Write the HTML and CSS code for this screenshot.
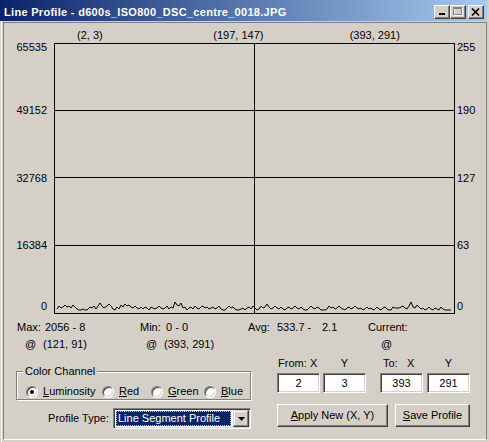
FILE: index.html
```html
<!DOCTYPE html>
<html lang="en">
<head>
    <meta charset="UTF-8">
    <title>Line Profile</title>
    <link rel="stylesheet" href="styles.css">
</head>
<body>
<div class="window">
    <!-- Title bar -->
    <div class="titlebar">
        <span class="title">Line Profile - d600s_ISO800_DSC_centre_0018.JPG</span>
        <div class="caption-buttons">
            <span class="cap-btn">
                <svg width="14" height="12"><rect x="4" y="7" width="6" height="2" fill="#000"/></svg>
            </span>
            <span class="cap-btn">
                <svg width="14" height="12">
                    <rect x="3.5" y="2.5" width="8" height="7" fill="none" stroke="#fff"/>
                    <rect x="2.5" y="1.5" width="8" height="7" fill="none" stroke="#808080"/>
                    <line x1="2" y1="2.5" x2="11" y2="2.5" stroke="#808080"/>
                </svg>
            </span>
            <span class="cap-btn cap-close">
                <svg width="14" height="12"><path d="M3 2.5 L10 9.5 M10 2.5 L3 9.5" stroke="#000" stroke-width="1.7"/></svg>
            </span>
        </div>
    </div>

    <div class="client">
        <div class="coords">
            <span>(2, 3)</span>
            <span>(197, 147)</span>
            <span>(393, 291)</span>
        </div>

        <!-- Profile chart -->
        <div class="chart">
            <div class="y-left row1">65535</div>
            <div class="y-left row2">49152</div>
            <div class="y-left row3">32768</div>
            <div class="y-left row4">16384</div>
            <div class="y-left row5">0</div>

            <div class="plot">
                <svg width="399" height="269" shape-rendering="crispEdges">
                    <line x1="0" y1="66.5" x2="399" y2="66.5" stroke="#000"/>
                    <line x1="0" y1="133.5" x2="399" y2="133.5" stroke="#000"/>
                    <line x1="0" y1="201.5" x2="399" y2="201.5" stroke="#000"/>
                    <line x1="199.5" y1="0" x2="199.5" y2="269" stroke="#000"/>
                    <polyline fill="none" stroke="#000" shape-rendering="auto" points="2,265 4,262 6,264 8,263 10,261 12,263 14,262 16,264 18,261 20,263 22,265 24,266 26,266 28,265 30,266 32,266 35,263 37,264 39,262 41,265 43,262 45,259 47,262 49,264 52,262 54,260 56,262 58,265 60,266 62,263 64,265 66,261 68,263 70,260 72,262 74,261 76,263 78,264 80,262 82,264 84,265 86,263 88,265 90,263 92,264 94,266 96,263 98,264 100,265 102,264 104,262 106,264 108,265 110,264 112,262 114,265 116,263 118,264 120,258 122,261 124,262 126,259 128,264 130,263 132,266 134,264 136,263 138,265 140,262 142,264 144,265 146,263 148,262 150,264 152,263 154,265 156,264 158,263 160,265 162,264 164,262 166,265 168,266 170,266 172,264 174,262 176,264 178,263 180,265 182,266 184,266 186,265 188,264 190,266 192,264 194,263 196,265 198,262 200,264 202,266 204,265 206,262 208,264 210,263 212,260 214,263 216,265 218,264 220,262 222,264 224,265 226,263 228,265 230,266 232,264 234,263 236,265 238,264 240,262 242,264 244,265 246,263 248,265 250,266 252,266 254,264 256,262 258,264 260,265 262,263 264,264 266,266 268,266 270,266 272,265 274,262 276,264 278,263 280,265 282,264 284,262 286,264 288,265 290,266 292,264 294,263 296,265 298,264 300,262 302,264 304,265 306,264 308,266 310,265 312,263 314,265 316,264 318,266 320,265 322,263 324,265 326,266 328,264 330,263 332,265 334,266 336,266 338,263 340,264 342,264 344,264 346,263 348,262 350,264 352,265 354,262 356,258 358,263 360,264 362,261 364,263 366,265 368,264 370,266 372,265 374,263 376,265 378,266 380,264 382,265 384,266 386,263 388,265 390,266 392,266 394,266 396,266"/>
                </svg>
            </div>

            <div class="y-right row1">255</div>
            <div class="y-right row2">190</div>
            <div class="y-right row3">127</div>
            <div class="y-right row4">63</div>
            <div class="y-right row5">0</div>
        </div>

        <!-- Statistics -->
        <div class="stats">
            <div><span class="stat-name w-max">Max:</span>2056 - 8</div>
            <div><span class="stat-name w-min">Min:</span>0 - 0</div>
            <div><span class="stat-name w-avg">Avg:</span><span class="avg-val">533.7 -</span>2.1</div>
            <div>Current:</div>

            <div><span class="at at-max">@</span>(121, 91)</div>
            <div><span class="at at-min">@</span>(393, 291)</div>
            <div></div>
            <div><span class="at at-cur">@</span></div>
        </div>

        <div class="controls">
            <div class="left-controls">
                <div class="groupbox">
                    <span class="group-title">Color Channel</span>
                    <div class="radios">
                        <label class="radio-item"><span class="radio checked"></span><span><u>L</u>uminosity</span></label>
                        <label class="radio-item"><span class="radio"></span><span><u>R</u>ed</span></label>
                        <label class="radio-item"><span class="radio"></span><span><u>G</u>reen</span></label>
                        <label class="radio-item"><span class="radio"></span><span><u>B</u>lue</span></label>
                    </div>
                </div>
                <div class="profile-row">
                    <span>Profile Type:</span>
                    <div class="select">
                        <span class="select-value">Line Segment Profile</span>
                        <span class="drop-btn">
                            <svg width="7" height="4"><polygon points="0,0 7,0 3.5,4" fill="#000"/></svg>
                        </span>
                    </div>
                </div>
            </div>

            <div class="right-controls">
                <div class="coord-fields">
                    <div class="coord-group">
                        <span class="coord-head from"><span class="from-name">From:</span>X</span>
                        <span class="coord-head center">Y</span>
                        <input class="field" type="text" value="2">
                        <input class="field" type="text" value="3">
                    </div>
                    <div class="coord-group to-group">
                        <span class="coord-head to"><span class="to-name">To:</span>X</span>
                        <span class="coord-head center">Y</span>
                        <input class="field" type="text" value="393">
                        <input class="field" type="text" value="291">
                    </div>
                </div>
                <div class="buttons">
                    <button class="btn btn-apply"><u>A</u>pply New (X, Y)</button>
                    <button class="btn btn-save"><u>S</u>ave Profile</button>
                </div>
            </div>
        </div>
    </div>
</div>
</body>
</html>
```

FILE: styles.css
```css
body {
    margin: 0;
    font-family: "Liberation Sans", Arial, sans-serif;
    font-size: 11px;
    color: #000;
    background-color: #d4d0c8;
}
.window {
    width: 489px;
    height: 442px;
    box-sizing: border-box;
    padding: 0 2px 2px 0;
    display: flex;
    flex-direction: column;
    background: linear-gradient(to right, #d4d0c8 1px, #fff 1px, #fff 2px, #d4d0c8 2px);
}

/* title bar */
.titlebar {
    height: 21px;
    box-sizing: border-box;
    padding: 3px 3px 0 4px;
    display: flex;
    align-items: center;
    background: linear-gradient(to right, #0a246a, #a6caf0);
    color: #fff;
    font-weight: bold;
}
.title {
    flex: 1;
    white-space: nowrap;
    overflow: hidden;
    letter-spacing: 0.3px;
}
.caption-buttons {
    display: flex;
}
.cap-btn {
    width: 16px;
    height: 14px;
    box-sizing: border-box;
    border: 1px solid;
    border-color: #fff #404040 #404040 #fff;
    box-shadow: inset -1px -1px #808080, inset 1px 1px #d4d0c8;
    background-color: #d4d0c8;
}
.cap-btn svg {
    display: block;
}
.cap-close {
    margin-left: 2px;
}

/* client area */
.client {
    flex: 1;
    margin: 1px 0 0 3px;
    padding-top: 6px;
    border: 1px solid #808080;
    border-bottom-color: #fff;
}
.coords {
    display: flex;
    height: 14px;
    line-height: 13px;
    margin-left: 73px;
}
.coords span {
    width: 143.5px;
}

/* chart */
.chart {
    display: grid;
    grid-template-columns: 50px 401px 1fr;
    grid-template-rows: 34px 67px 68px 67px 35px;
    line-height: 13px;
}
.y-left {
    grid-column: 1;
    text-align: right;
    padding-right: 7px;
    align-self: center;
}
.y-right {
    grid-column: 3;
    padding-left: 2px;
    align-self: center;
}
.row1 { grid-row: 1; align-self: start; margin-top: -2px; }
.row2 { grid-row: 2; }
.row3 { grid-row: 3; }
.row4 { grid-row: 4; }
.row5 { grid-row: 5; align-self: end; margin-bottom: 1px; }
.plot {
    grid-column: 2;
    grid-row: 1 / 6;
    border: 1px solid #000;
}
.plot svg {
    display: block;
}

/* stats */
.stats {
    display: grid;
    grid-template-columns: 123px 108px 120px 1fr;
    row-gap: 4px;
    margin-top: 7px;
    padding-left: 13px;
    line-height: 13px;
}
.stat-name, .avg-val, .at {
    display: inline-block;
}
.w-max { width: 28px; }
.w-min { width: 26px; }
.w-avg { width: 29px; }
.avg-val { width: 45px; }
.at { width: 18px; }
.at-max { margin-left: 8px; }
.at-min { margin-left: 6px; }
.at-cur { margin-left: 13px; }

/* bottom controls */
.controls {
    display: flex;
    margin-top: 6px;
    padding-left: 12px;
    line-height: 13px;
}
.left-controls {
    width: 235px;
    margin-top: 14px;
}
.groupbox {
    height: 29px;
    box-sizing: border-box;
    border: 1px solid #808080;
    box-shadow: inset 1px 1px #fff, 1px 1px #fff;
}
.group-title {
    display: inline-block;
    margin: -7px 0 0 6px;
    padding: 0 2px;
    background-color: #d4d0c8;
    vertical-align: top;
}
.radios {
    display: grid;
    grid-template-columns: 76px 49px 53px auto;
    margin-left: 9px;
}
.radio-item {
    display: flex;
    align-items: center;
    gap: 5px;
}
.radio {
    width: 12px;
    height: 12px;
    box-sizing: border-box;
    border-radius: 50%;
    border: 1px solid;
    border-color: #808080 #fff #fff #808080;
    box-shadow: inset 1px 1px #404040, inset -1px -1px #d4d0c8;
    background-color: #fff;
    display: flex;
    align-items: center;
    justify-content: center;
}
.radio.checked::after {
    content: "";
    width: 4px;
    height: 4px;
    border-radius: 50%;
    background-color: #000;
}
.profile-row {
    display: flex;
    justify-content: flex-end;
    align-items: center;
    gap: 4px;
    margin-top: 8px;
}
.select {
    width: 138px;
    height: 21px;
    box-sizing: border-box;
    padding: 1px;
    display: flex;
    border: 1px solid;
    border-color: #808080 #fff #fff #808080;
    box-shadow: inset 1px 1px #404040, inset -1px -1px #d4d0c8;
    background-color: #fff;
}
.select-value {
    flex: 1;
    display: flex;
    align-items: center;
    margin: 1px 2px 1px 1px;
    padding-left: 2px;
    background-color: #0a246a;
    color: #fff;
    outline: 1px dotted #d6c36a;
    outline-offset: -1px;
}
.drop-btn {
    width: 16px;
    height: 17px;
    box-sizing: border-box;
    border: 1px solid;
    border-color: #d4d0c8 #404040 #404040 #d4d0c8;
    box-shadow: inset -1px -1px #808080, inset 1px 1px #fff;
    background-color: #d4d0c8;
    display: flex;
    align-items: center;
    justify-content: center;
}
.drop-btn svg {
    display: block;
}

.right-controls {
    margin-left: 26px;
}
.coord-fields {
    display: flex;
    gap: 14px;
}
.coord-group {
    display: grid;
    grid-template-columns: 43px 43px;
    column-gap: 3px;
    row-gap: 3px;
}
.to-group {
    column-gap: 4px;
}
.coord-head.from { padding-left: 1px; }
.coord-head.to { padding-left: 3px; }
.coord-head.center { text-align: center; }
.from-name, .to-name {
    display: inline-block;
}
.from-name { width: 32px; }
.to-name { width: 24px; }
.field {
    width: 43px;
    height: 20px;
    box-sizing: border-box;
    padding: 0;
    border: 1px solid;
    border-color: #808080 #fff #fff #808080;
    box-shadow: inset 1px 1px #404040, inset -1px -1px #d4d0c8;
    background-color: #fff;
    font: inherit;
    color: #000;
    text-align: center;
}
.buttons {
    display: flex;
    gap: 7px;
    margin-top: 11px;
}
.btn {
    height: 23px;
    padding: 0;
    font: inherit;
    color: #000;
    border: 1px solid;
    border-color: #fff #404040 #404040 #fff;
    box-shadow: inset -1px -1px #808080, inset 1px 1px #d4d0c8;
    background-color: #d4d0c8;
}
.btn-apply { width: 111px; }
.btn-save { width: 75px; }
```
